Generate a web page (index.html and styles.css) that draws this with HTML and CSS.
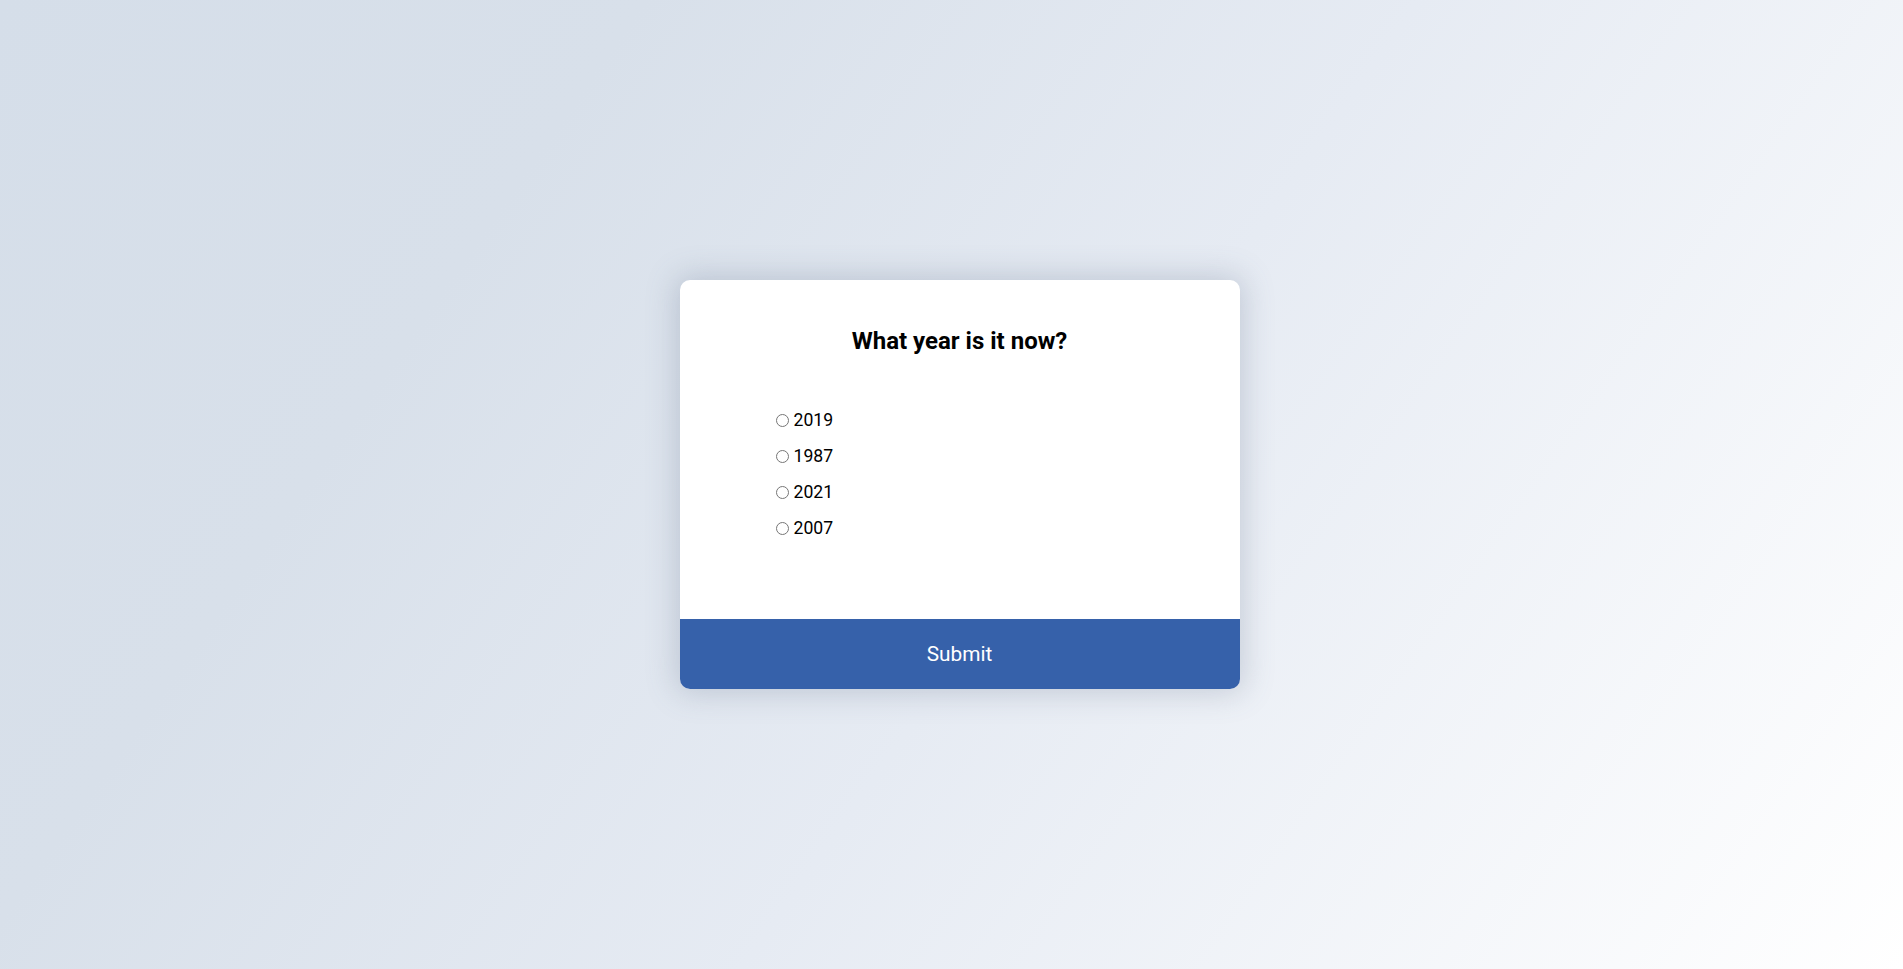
FILE: index.html
```html
<!DOCTYPE html>
<html lang="en">
<head>
<meta charset="utf-8">
<title>Quiz</title>
<link rel="stylesheet" href="styles.css">
</head>
<body>
<div class="quiz">
  <div class="quiz-header">
    <h2 class="question">What year is it now?</h2>
    <ul class="answers">
      <li><input type="radio" name="answer" id="a"><label for="a">2019</label></li>
      <li><input type="radio" name="answer" id="b"><label for="b">1987</label></li>
      <li><input type="radio" name="answer" id="c"><label for="c">2021</label></li>
      <li><input type="radio" name="answer" id="d"><label for="d">2007</label></li>
    </ul>
  </div>
  <button class="submit">Submit</button>
</div>
</body>
</html>
```

FILE: styles.css
```css
html, body {
  margin: 0;
  height: 100%;
}
body {
  box-sizing: border-box;
  padding-left: 16px;
  font-family: Roboto, "Liberation Sans", sans-serif;
  background: linear-gradient(125deg, #d5dee9 0%, #d8e0ea 25%, #e6ebf3 55%, #ffffff 100%);
  display: flex;
  align-items: center;
  justify-content: center;
}
.quiz {
  width: 560px;
  height: 409px;
  background: #fff;
  border-radius: 10px;
  overflow: hidden;
  box-shadow: 0 0 30px 4px rgba(90, 105, 130, 0.26);
  display: flex;
  flex-direction: column;
}
.quiz-header {
  flex: 1;
  padding: 47px 96px 0;
}
.question {
  margin: 0;
  text-align: center;
  font-size: 24px;
  font-weight: 700;
  line-height: 28px;
  color: #000;
}
.answers {
  list-style: none;
  margin: 54px 0 0;
  padding: 0;
  display: flex;
  flex-direction: column;
  gap: 14px;
}
.answers li {
  display: flex;
  align-items: center;
  height: 22px;
  font-size: 17.6px;
  color: #000;
}
.answers input {
  margin: 0 5px 0 0;
  width: 13px;
  height: 13px;
}
.submit {
  height: 70px;
  border: none;
  background: #3661aa;
  color: #fff;
  font-family: inherit;
  font-size: 20.8px;
  cursor: pointer;
  padding: 0;
}
```
